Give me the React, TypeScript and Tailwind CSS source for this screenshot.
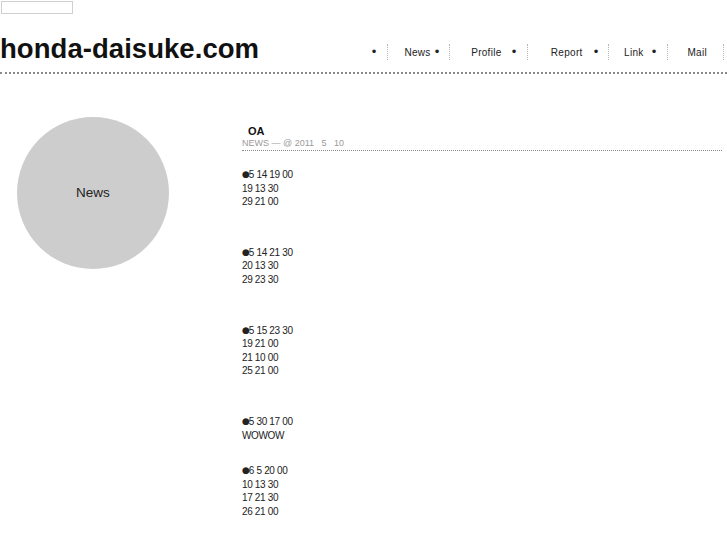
import React from 'react';

// nav cells: label, gap before bullet, cell width, right padding
const NAV = [
  { label: '', dot: true, gap: 'ml-0', w: 'w-[28px]', pr: 'pr-[9px]' },
  { label: 'News', dot: true, gap: 'ml-[3px]', w: 'w-[62px]', pr: 'pr-[8px]' },
  { label: 'Profile', dot: true, gap: 'ml-[9px]', w: 'w-[78px]', pr: 'pr-[9px]' },
  { label: 'Report', dot: true, gap: 'ml-[10px]', w: 'w-[81px]', pr: 'pr-[8px]' },
  { label: 'Link', dot: true, gap: 'ml-[7px]', w: 'w-[59px]', pr: 'pr-[9px]' },
  { label: 'Mail', dot: false, gap: 'ml-0', w: 'w-[56px]', pr: 'pr-[16px]' },
];

const SCHEDULE = [
  { gap: 'mt-0', head: '5 14 19 00', lines: ['19 13 30', '29 21 00'] },
  { gap: 'mt-[37px]', head: '5 14 21 30', lines: ['20 13 30', '29 23 30'] },
  { gap: 'mt-[37px]', head: '5 15 23 30', lines: ['19 21 00', '21 10 00', '25 21 00'] },
  { gap: 'mt-[37px]', head: '5 30 17 00', lines: ['WOWOW'] },
  { gap: 'mt-[22px]', head: '6 5 20 00', lines: ['10 13 30', '17 21 30', '26 21 00'] },
];

const App = () => {
  return (
    <div className="min-h-[545px] w-[727px] bg-white text-[#222] font-['Liberation_Sans',Arial,sans-serif]">
      {/* search box */}
      <div className="ml-[1px] pt-[1px]">
        <div className="h-[13px] w-[72px] border border-[#cfcfcf] bg-white" />
      </div>

      {/* header */}
      <div className="mt-[21px] flex items-start justify-between border-b-2 border-dotted border-[#8a8a8a] pb-[9px]">
        <h1 className="text-[27.5px] font-bold leading-[28px] tracking-[0.05px] text-[#111]">honda-daisuke.com</h1>
        <ul className="mr-[3px] mt-[9px] flex">
          {NAV.map((item, i) => (
            <li
              key={i}
              className={`flex h-[16px] items-center justify-end border-r border-dotted border-[#b5b5b5] text-[10px] tracking-[0.3px] ${item.w} ${item.pr}`}
            >
              {item.label && <span>{item.label}</span>}
              {item.dot && <span className={`font-['DejaVu_Sans',sans-serif] text-[12px] leading-none ${item.gap}`}>•</span>}
            </li>
          ))}
        </ul>
      </div>

      {/* main */}
      <div className="flex items-start">
        <div className="ml-[17px] mt-[43px] flex h-[152px] w-[152px] shrink-0 items-center justify-center rounded-full bg-[#cdcdcd]">
          <span className="text-[13.5px] text-[#222]">News</span>
        </div>

        <div className="ml-[73px] mt-[51px] w-[480px]">
          <div className="border-b border-dotted border-[#8a8a8a] pb-[1px]">
            <h2 className="pl-[6px] text-[11px] font-bold leading-[12px] text-[#111]">OA</h2>
            <p className="text-[9px] leading-[12px] text-[#9a9a9a]">NEWS — @ 2011&nbsp;&nbsp;&nbsp;5&nbsp;&nbsp;&nbsp;10</p>
          </div>

          <div className="mt-[17px] text-[10px] leading-[13.6px] tracking-[-0.35px]">
            {SCHEDULE.map((block, i) => (
              <div key={i} className={block.gap}>
                <p className="h-[13.6px]">
                  <span className="font-['DejaVu_Sans',sans-serif] text-[9px] leading-[0] tracking-[-1px] align-[1px]">●</span>
                  {block.head}
                </p>
                {block.lines.map((line, j) => (
                  <p key={j}>{line}</p>
                ))}
              </div>
            ))}
          </div>
        </div>
      </div>
    </div>
  );
};

export default App;
